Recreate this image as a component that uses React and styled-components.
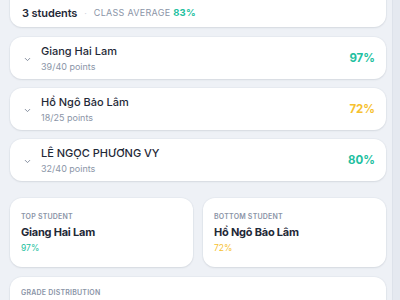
import React from 'react';
import styled, { createGlobalStyle } from 'styled-components';

const GlobalStyle = createGlobalStyle`
  html, body {
    margin: 0;
    padding: 0;
    background: #eef1f6;
    font-family: Inter, "Noto Sans", sans-serif;
    overflow: hidden;
  }
`;

const colors = {
  good: '#23bfa0',
  warn: '#f6c12f',
  ink: '#1f2937',
  muted: '#8b95a7'
};

const students = [
  { name: 'Giang Hai Lam', earned: 39, total: 40, pct: 97, tone: 'good' },
  { name: 'Hồ Ngô Bảo Lâm', earned: 18, total: 25, pct: 72, tone: 'warn' },
  { name: 'LÊ NGỌC PHƯƠNG VY', earned: 32, total: 40, pct: 80, tone: 'good' }
];

const Frame = styled.div`
  display: flex;
  height: 300px;
  overflow: hidden;
`;

const Main = styled.main`
  flex: 1;
  padding: 0 6px 0 10px;
  margin-top: -14px;
`;

const Rail = styled.div`
  width: 7px;
  background: #e5e9f0;
  border-left: 1px solid #dde2ea;
`;

const Card = styled.section`
  background: #fff;
  border-radius: 12px;
  box-shadow: 0 1px 2px rgba(30, 41, 59, 0.09), 0 0 0 1px rgba(226, 231, 239, 0.6);
`;

const Header = styled(Card)`
  height: 41px;
  display: flex;
  align-items: center;
  gap: 7px;
  padding: 13px 12px 0;
  box-sizing: border-box;
`;

const Count = styled.span`
  font-size: 11px;
  font-weight: 600;
  letter-spacing: -0.01em;
  color: ${colors.ink};
`;

const Dot = styled.span`
  color: #cfd5de;
  font-size: 9px;
`;

const Label = styled.span`
  font-size: 7px;
  line-height: 9px;
  font-weight: ${p => (p.$bold ? 600 : 500)};
  letter-spacing: 0.03em;
  text-transform: uppercase;
  color: ${colors.muted};
`;

const HeadLabel = styled(Label)`
  font-size: 9px;
  line-height: 12px;
  font-weight: 400;
  letter-spacing: 0.03em;
`;

const Pct = styled.b`
  color: ${p => colors[p.$tone]};
  font-weight: 700;
  font-size: ${p => p.$size || 11.5}px;
`;

const List = styled.div`
  display: flex;
  flex-direction: column;
  gap: 9px;
  margin-top: 10px;
`;

const Row = styled(Card)`
  height: 42px;
  display: flex;
  align-items: center;
  padding: 0 11px 0 13px;
  box-sizing: border-box;
`;

const Chevron = styled.svg`
  width: 9px;
  height: 9px;
  margin-right: 9px;
  margin-top: 3px;
  color: #7b8596;
`;

const Info = styled.div`
  flex: 1;
  display: flex;
  flex-direction: column;
  gap: 3px;
`;

const Name = styled.div`
  font-size: 11px;
  font-weight: 500;
  color: ${colors.ink};
`;

const Sub = styled.div`
  font-size: 9px;
  color: ${colors.muted};
`;

const Pair = styled.div`
  display: grid;
  grid-template-columns: 1fr 1fr;
  gap: 10px;
  margin-top: 17px;
`;

const Stat = styled(Card)`
  height: 69px;
  padding: 14px 11px 0;
  box-sizing: border-box;
  display: flex;
  flex-direction: column;
  align-items: flex-start;
`;

const StatName = styled.div`
  font-size: 11px;
  line-height: 13px;
  font-weight: 700;
  letter-spacing: -0.02em;
  color: ${colors.ink};
  margin: 5px 0 4px;
`;

const StatPct = styled.span`
  font-size: 8.5px;
  line-height: 11px;
  color: ${p => colors[p.$tone]};
`;

const Dist = styled(Card)`
  margin-top: 10px;
  height: 60px;
  padding: 11px 11px 0;
  box-sizing: border-box;
  display: flex;
  flex-direction: column;
  align-items: flex-start;
`;

const Arrow = () => (
  <Chevron viewBox="0 0 24 24" fill="none" stroke="currentColor" strokeWidth="2.4" strokeLinecap="round" strokeLinejoin="round">
    <path d="M6 9l6 6 6-6" />
  </Chevron>
);

export default function App() {
  return (
    <>
      <GlobalStyle />
      <Frame>
        <Main>
          <Header>
            <Count>3 students</Count>
            <Dot>·</Dot>
            <HeadLabel>
              Class average <Pct $tone="good" $size={9.5}>83%</Pct>
            </HeadLabel>
          </Header>

          <List>
            {students.map(s => (
              <Row key={s.name}>
                <Arrow />
                <Info>
                  <Name>{s.name}</Name>
                  <Sub>{s.earned}/{s.total} points</Sub>
                </Info>
                <Pct $tone={s.tone}>{s.pct}%</Pct>
              </Row>
            ))}
          </List>

          <Pair>
            <Stat>
              <Label $bold>Top student</Label>
              <StatName>Giang Hai Lam</StatName>
              <StatPct $tone="good">97%</StatPct>
            </Stat>
            <Stat>
              <Label $bold>Bottom student</Label>
              <StatName>Hồ Ngô Bảo Lâm</StatName>
              <StatPct $tone="warn">72%</StatPct>
            </Stat>
          </Pair>

          <Dist>
            <Label $bold>Grade distribution</Label>
          </Dist>
        </Main>
        <Rail />
      </Frame>
    </>
  );
}
